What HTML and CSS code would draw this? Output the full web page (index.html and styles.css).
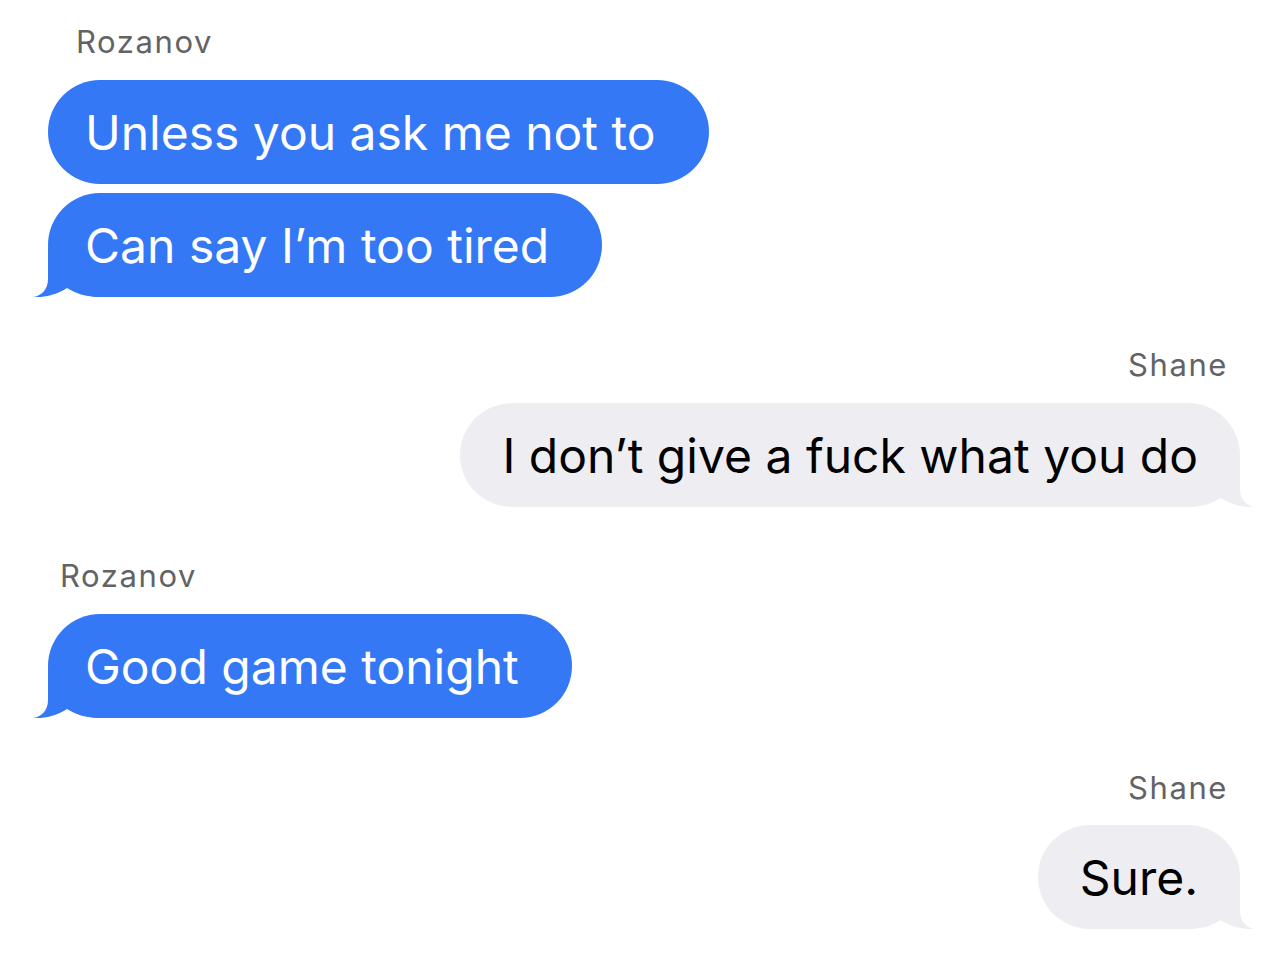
FILE: index.html
```html
<!DOCTYPE html>
<html>
<head>
<meta charset="utf-8">
<link rel="stylesheet" href="styles.css">
</head>
<body>
<div class="chat">
  <div class="label left l1">Rozanov</div>
  <div class="row left">
    <div class="bubble blue"><span class="txt">Unless you ask me not to</span></div>
  </div>
  <div class="row left gap-small">
    <div class="bubble blue"><span class="txt">Can say I’m too tired</span>
      <svg class="tail tail-left" viewBox="0 0 68 50" width="68" height="50"><path d="M15,0 L15,32 C15,43 8,49 0,50 C12,51 25,47 34,41 C42,46 52,50 68,50 L68,0 Z"/></svg>
    </div>
  </div>

  <div class="label right s1">Shane</div>
  <div class="row right">
    <div class="bubble gray"><span class="txt">I don’t give a fuck what you do</span>
      <svg class="tail tail-right" viewBox="0 0 68 50" width="68" height="50"><path d="M53,0 L53,32 C53,43 60,49 68,50 C56,51 43,47 34,41 C26,46 16,50 0,50 L0,0 Z"/></svg>
    </div>
  </div>

  <div class="label left l2">Rozanov</div>
  <div class="row left">
    <div class="bubble blue"><span class="txt">Good game tonight</span>
      <svg class="tail tail-left" viewBox="0 0 68 50" width="68" height="50"><path d="M15,0 L15,32 C15,43 8,49 0,50 C12,51 25,47 34,41 C42,46 52,50 68,50 L68,0 Z"/></svg>
    </div>
  </div>

  <div class="label right s2">Shane</div>
  <div class="row right">
    <div class="bubble gray"><span class="txt">Sure.</span>
      <svg class="tail tail-right" viewBox="0 0 68 50" width="68" height="50"><path d="M53,0 L53,32 C53,43 60,49 68,50 C56,51 43,47 34,41 C26,46 16,50 0,50 L0,0 Z"/></svg>
    </div>
  </div>
</div>
</body>
</html>
```
FILE: styles.css
```css
html, body {
  margin: 0;
  padding: 0;
  background: #ffffff;
}
body {
  font-family: "Inter", "Helvetica Neue", "Liberation Sans", sans-serif;
  width: 1285px;
  height: 980px;
  overflow: hidden;
}
.chat {
  display: flex;
  flex-direction: column;
  padding: 22px 45px 0 48px;
}
.label {
  font-size: 31px;
  line-height: 40px;
  letter-spacing: 1.6px;
  color: #636366;
  margin-bottom: 18px;
}
.label.l1 { padding-left: 28px; }
.label.s1 { margin-top: 48px; }
.label.l2 { padding-left: 12px; margin-top: 49px; }
.label.s2 { margin-top: 50px; margin-bottom: 17px; }
.label.right { text-align: right; padding-right: 12px; }
.row { display: flex; }
.row.left { justify-content: flex-start; }
.row.right { justify-content: flex-end; }
.gap-small { margin-top: 9px; }
.bubble {
  position: relative;
  height: 104px;
  border-radius: 52px;
  display: flex;
  align-items: center;
  font-size: 48px;
  letter-spacing: 0;
  white-space: nowrap;
  box-sizing: border-box;
}
.txt {
  position: relative;
  z-index: 1;
}
.bubble.blue {
  background: #3478f6;
  color: #ffffff;
  padding: 0 53px 0 37px;
}
.bubble.gray {
  background: #eeeef2;
  color: #000000;
  padding: 0 42px 0 42px;
}
.tail {
  position: absolute;
  bottom: 0;
  z-index: 0;
}
.tail-left { left: -15px; fill: #3478f6; }
.tail-right { right: -15px; fill: #eeeef2; }
```
